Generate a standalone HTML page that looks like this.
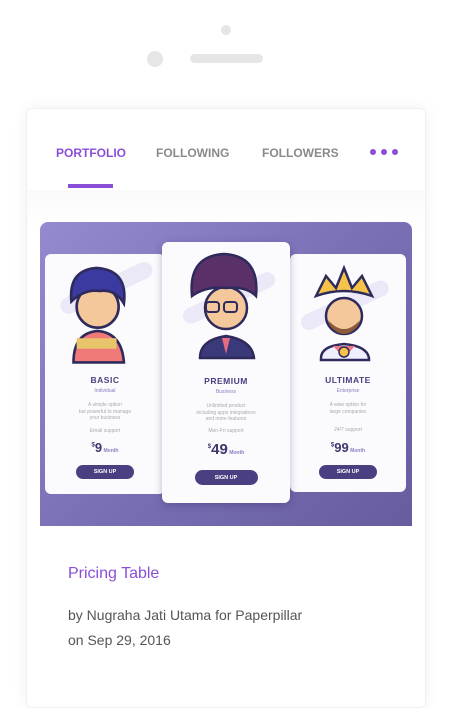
<!DOCTYPE html>
<html><head><style>
*{margin:0;padding:0;box-sizing:border-box}
body{width:451px;height:665px;background:#fff;font-family:"Liberation Sans",sans-serif;position:relative;overflow:hidden}
.abs{position:absolute}
.card{position:absolute;background:#fbfbfe;border-radius:6px;text-align:center;color:#4a3f80}
.t{font-weight:bold;font-size:8.5px;letter-spacing:.5px;color:#4a3f80}
.s{font-size:5px;color:#8a7fc0;margin-top:3px}
.d{font-size:5px;color:#aaa;line-height:6.5px}
.p{font-weight:bold;color:#3f356f}
.btn{background:#4a3f80;color:#fff;font-size:5.5px;font-weight:bold;border-radius:8px;margin:0 auto;display:flex;align-items:center;justify-content:center}
</style></head><body>
<div class="abs" style="left:221px;top:25px;width:10px;height:10px;border-radius:50%;background:#e6e6e6"></div>
<div class="abs" style="left:147px;top:51px;width:16px;height:16px;border-radius:50%;background:#e6e6e6"></div>
<div class="abs" style="left:190px;top:54px;width:73px;height:9px;border-radius:5px;background:#e6e6e6"></div>
<div class="abs" style="left:26px;top:108px;width:400px;height:600px;background:#fff;border:1px solid #f0f0f0;border-radius:6px;box-shadow:0 0 16px rgba(0,0,0,.06)"></div>
<div class="abs" style="left:27px;top:190px;width:398px;height:40px;background:linear-gradient(#fafafa,#fff)"></div>
<div class="abs" style="left:56px;top:146px;font-size:12px;font-weight:bold;color:#8a4fd8">PORTFOLIO</div>
<div class="abs" style="left:156px;top:146px;font-size:12px;font-weight:bold;color:#8a8a8a">FOLLOWING</div>
<div class="abs" style="left:262px;top:146px;font-size:12px;font-weight:bold;color:#8a8a8a">FOLLOWERS</div>
<div class="abs" style="left:370px;top:149px;width:6px;height:6px;border-radius:50%;background:#8a4fd8"></div>
<div class="abs" style="left:381px;top:149px;width:6px;height:6px;border-radius:50%;background:#8a4fd8"></div>
<div class="abs" style="left:392px;top:149px;width:6px;height:6px;border-radius:50%;background:#8a4fd8"></div>
<div class="abs" style="left:68px;top:184px;width:45px;height:4px;background:#8a4fd8"></div>
<div class="abs" style="left:40px;top:222px;width:372px;height:304px;border-radius:8px 8px 0 0;background:linear-gradient(135deg,#938ad0,#7a70b6 50%,#665c9e)"></div>

<div class="card" style="left:45px;top:254px;width:120px;height:240px">
<svg width="120" height="110" style="position:absolute;left:0;top:0"><g transform="translate(-3,-26) scale(1.05)">
<rect x="15" y="50" width="95" height="16" rx="8" fill="#ebe9f8" transform="rotate(-25 60 60)"/>
<path d="M30 128 Q30 100 53 98 Q76 100 78 128Z" fill="#f07a7a" stroke="#2f2a5c" stroke-width="2.5"/>
<rect x="33" y="105" width="38" height="10" fill="#e8c46a"/>
<circle cx="53" cy="75" r="20" fill="#f5c89b" stroke="#2f2a5c" stroke-width="2.5"/>
<path d="M28 70 Q25 40 52 38 Q82 40 78 72 Q70 58 55 60 Q40 58 28 70Z" fill="#3a3aa0" stroke="#2f2a5c" stroke-width="2.5"/>
</g></svg>
<div style="position:absolute;top:121px;width:100%"><div class="t">BASIC</div><div class="s">Individual</div>
<div class="d" style="margin-top:8px">A simple option<br>but powerful to manage<br>your business</div>
<div class="d" style="margin-top:6px">Email support</div>
<div class="p" style="margin-top:6px;font-size:13px"><sup style="font-size:6px">$</sup>9<span style="font-size:5px;color:#8a7fc0"> Month</span></div>
<div class="btn" style="width:58px;height:14px;margin-top:10px">SIGN UP</div></div>
</div>

<div class="card" style="top:254px;height:238px;left:290px;width:116px">
<svg width="116" height="110" style="position:absolute;left:0;top:0"><g transform="translate(-2,-8)">
<rect x="10" y="50" width="95" height="16" rx="8" fill="#ebe9f8" transform="rotate(-25 60 60)"/>
<path d="M33 112 Q33 100 56 98 Q79 100 81 112 L81 114 L33 114Z" fill="#eef" stroke="#2f2a5c" stroke-width="2.5"/>
<path d="M45 100 L56 112 L67 100" fill="#f07a8a"/>
<circle cx="56" cy="70" r="18" fill="#f5c89b" stroke="#2f2a5c" stroke-width="2.5"/>
<path d="M40 74 Q56 92 72 74 L70 80 Q56 96 42 80Z" fill="#8a5a3a"/>
<path d="M28 50 L38 30 L48 42 L56 22 L64 42 L74 30 L84 50 Q56 40 28 50Z" fill="#f6c34a" stroke="#2f2a5c" stroke-width="2.5"/>
<circle cx="56" cy="106" r="5" fill="#f6c34a" stroke="#2f2a5c" stroke-width="1.5"/>
</g></svg>
<div style="position:absolute;top:121px;width:100%"><div class="t">ULTIMATE</div><div class="s">Enterprise</div>
<div class="d" style="margin-top:8px">A wise option for<br>large companies</div>
<div class="d" style="margin-top:12px">24/7 support</div>
<div class="p" style="margin-top:6px;font-size:13px"><sup style="font-size:6px">$</sup>99<span style="font-size:5px;color:#8a7fc0"> Month</span></div>
<div class="btn" style="width:58px;height:14px;margin-top:10px">SIGN UP</div></div>
</div>

<div class="card" style="left:162px;top:242px;width:128px;height:261px;box-shadow:0 2px 8px rgba(40,30,90,.3)">
<svg width="128" height="125" style="position:absolute;left:0;top:0"><g transform="translate(4,-6)">
<rect x="12" y="55" width="100" height="16" rx="8" fill="#ebe9f8" transform="rotate(-25 60 60)"/>
<path d="M34 122 Q34 104 60 100 Q86 104 88 122Z" fill="#3a3a7a" stroke="#2f2a5c" stroke-width="2.5"/>
<path d="M56 102 L60 118 L64 102Z" fill="#e86a80"/>
<circle cx="60" cy="72" r="21" fill="#f5c89b" stroke="#2f2a5c" stroke-width="2.5"/>
<path d="M26 60 Q22 20 58 18 Q94 20 90 60 Q80 50 60 52 Q40 50 26 60Z" fill="#5a3068" stroke="#2f2a5c" stroke-width="2.5"/>
<rect x="40" y="66" width="13" height="10" rx="3" fill="none" stroke="#2f2a5c" stroke-width="2"/>
<rect x="58" y="66" width="13" height="10" rx="3" fill="none" stroke="#2f2a5c" stroke-width="2"/>
</g></svg>
<div style="position:absolute;top:134px;width:100%"><div class="t">PREMIUM</div><div class="s">Business</div>
<div class="d" style="margin-top:8px">Unlimited product<br>including apps integrations<br>and more features</div>
<div class="d" style="margin-top:5px">Mon-Fri support</div>
<div class="p" style="margin-top:7px;font-size:15px"><sup style="font-size:6px">$</sup>49<span style="font-size:5px;color:#8a7fc0"> Month</span></div>
<div class="btn" style="width:63px;height:15px;margin-top:12px">SIGN UP</div></div>
</div>

<div class="abs" style="left:68px;top:565px;font-size:16px;color:#8a4fd8">Pricing Table</div>
<div class="abs" style="left:68px;top:603px;font-size:14px;color:#555;line-height:25px">by Nugraha Jati Utama for Paperpillar<br>on Sep 29, 2016</div>
</body></html>
